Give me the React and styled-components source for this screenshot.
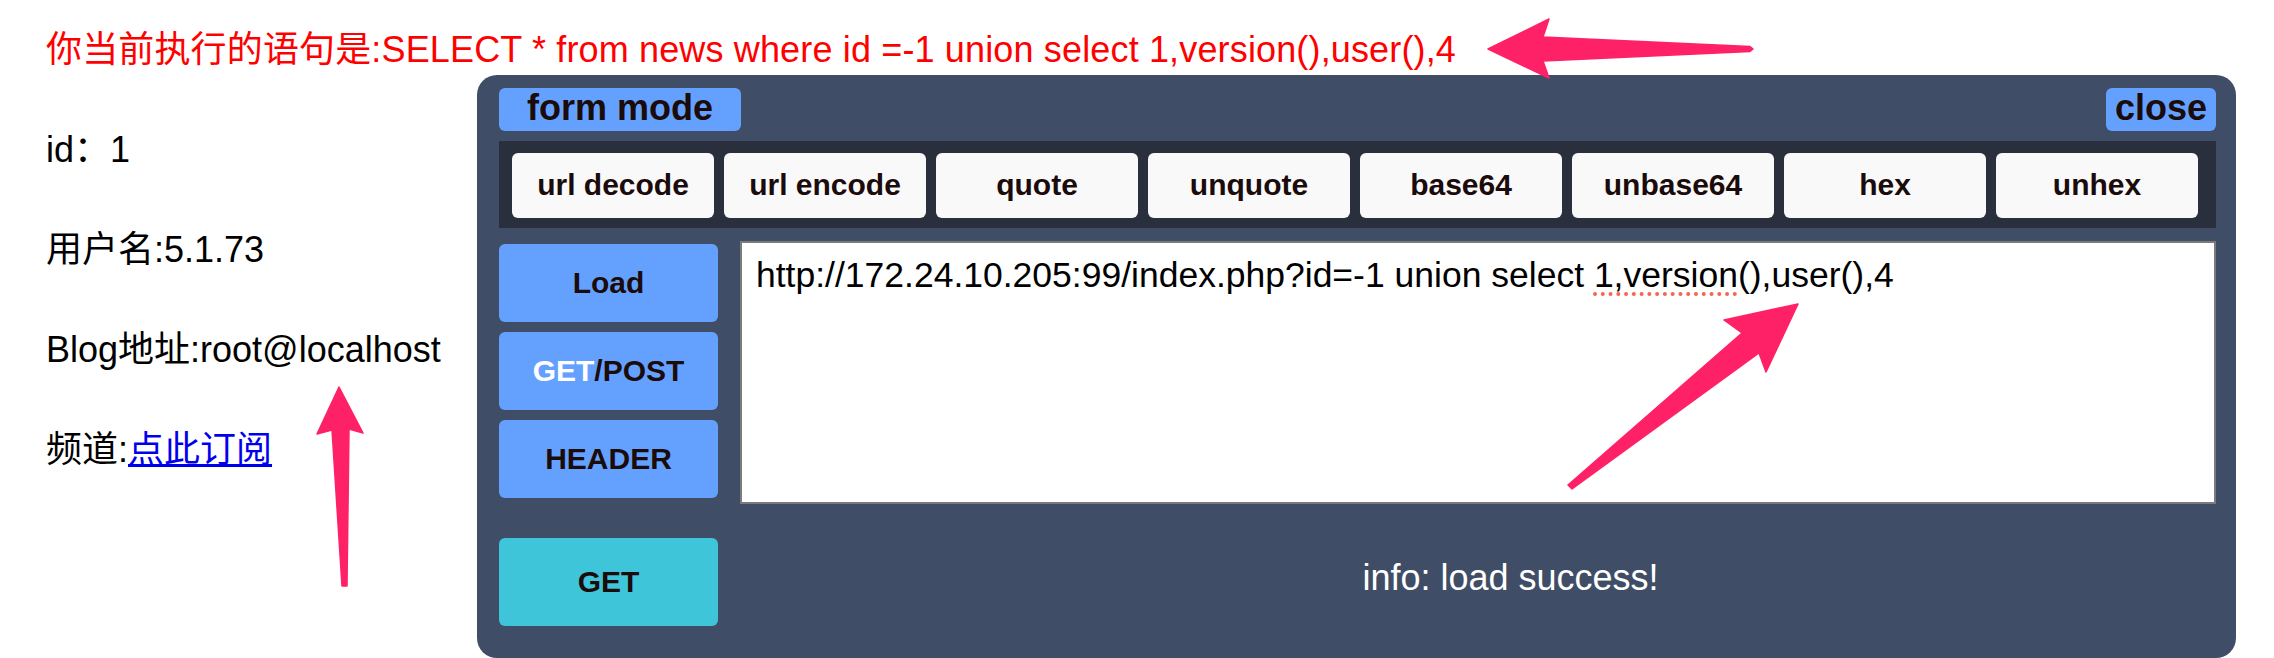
import React from "react";
import styled, { createGlobalStyle } from "styled-components";

const Global = createGlobalStyle`
  html, body { margin: 0; padding: 0; background: #ffffff; }
  body {
    font-family: "Liberation Sans", "Noto Sans CJK SC", Arial, sans-serif;
    font-size: 36px;
    color: #000;
  }
`;

const Page = styled.div`
  position: relative;
  width: 2274px;
  height: 658px;
  overflow: hidden;
  padding-left: 46px;
  box-sizing: border-box;
`;

const QueryLine = styled.div`
  padding-top: 29px;
  line-height: 41px;
  height: 42px;
  color: #ff0000;
  white-space: nowrap;
  letter-spacing: 0.15px;
`;

const Row = styled.div`
  display: flex;
  align-items: flex-start;
`;

const InfoColumn = styled.div`
  width: 431px;
  flex: none;
  padding-top: 58px;
  display: flex;
  flex-direction: column;
  gap: 59px;
`;

const InfoLine = styled.p`
  margin: 0;
  line-height: 41px;
  white-space: nowrap;
  color: #000;
`;

const SubLink = styled.a`
  color: #0000ee;
  text-decoration: underline;
`;

const Panel = styled.section`
  width: 1759px;
  box-sizing: border-box;
  margin-top: 4px;
  background: #3f4e66;
  border-radius: 20px;
  padding: 13px 20px 32px 22px;
  display: flex;
  flex-direction: column;
`;

const TopBar = styled.div`
  display: flex;
  justify-content: space-between;
  height: 43px;
`;

const BlueTab = styled.button`
  width: ${(p) => p.$w}px;
  height: 43px;
  padding: 0 0 3px;
  border: none;
  border-radius: 6px;
  background: #64a1ff;
  color: #1b0b0b;
  font: bold 36px/40px "Liberation Sans", Arial, sans-serif;
  text-align: center;
`;

const ToolStrip = styled.div`
  margin-top: 10px;
  background: #292f3c;
  padding: 12px 18px 10px 13px;
  display: flex;
  gap: 10px;
`;

const ToolButton = styled.button`
  width: 202px;
  height: 65px;
  flex: none;
  padding: 0 0 2px;
  border: none;
  border-radius: 6px;
  background: #f9f9f9;
  color: #1b0b0b;
  font: bold 30px/63px "Liberation Sans", Arial, sans-serif;
  text-align: center;
`;

const MainRow = styled.div`
  margin-top: 13px;
  display: flex;
  gap: 22px;
  height: 263px;
`;

const SideColumn = styled.div`
  width: 219px;
  flex: none;
  padding-top: 3px;
  display: flex;
  flex-direction: column;
  gap: 10px;
`;

const ActionButton = styled.button`
  width: 219px;
  height: ${(p) => p.$h || 78}px;
  padding: 0;
  border: none;
  border-radius: 6px;
  background: ${(p) => p.$bg || "#64a1ff"};
  color: #1b0b0b;
  font: bold 30px/1 "Liberation Sans", Arial, sans-serif;
  text-align: center;
`;

const Light = styled.span`
  color: #ffffff;
`;

const UrlField = styled.div`
  flex: 1;
  box-sizing: border-box;
  background: #ffffff;
  border: 2px solid #7b7b7b;
  padding: 12px 14px;
  font-size: 35.5px;
  line-height: 41px;
  color: #000;
  white-space: nowrap;
  overflow: hidden;
`;

const Misspelled = styled.span`
  text-decoration: underline dotted #f4664f;
  text-decoration-thickness: 4px;
  text-underline-offset: 5px;
`;

const BottomRow = styled.div`
  margin-top: 34px;
  display: flex;
  gap: 22px;
  height: 88px;
`;

const Status = styled.div`
  flex: 1;
  padding-top: 19px;
  padding-left: 65px;
  line-height: 41px;
  color: #ffffff;
  text-align: center;
  white-space: nowrap;
`;

const Annotations = styled.svg`
  position: absolute;
  left: 0;
  top: 0;
  width: 2274px;
  height: 658px;
  pointer-events: none;
`;

const tools = [
  "url decode",
  "url encode",
  "quote",
  "unquote",
  "base64",
  "unbase64",
  "hex",
  "unhex",
];

export default function App() {
  return (
    <>
      <Global />
      <Page>
        <QueryLine>
          你当前执行的语句是:SELECT * from news where id =-1 union select 1,version(),user(),4
        </QueryLine>
        <Row>
          <InfoColumn>
            <InfoLine>id：1</InfoLine>
            <InfoLine>用户名:5.1.73</InfoLine>
            <InfoLine>Blog地址:root@localhost</InfoLine>
            <InfoLine>
              频道:<SubLink href="#">点此订阅</SubLink>
            </InfoLine>
          </InfoColumn>
          <Panel>
            <TopBar>
              <BlueTab $w={242}>form mode</BlueTab>
              <BlueTab $w={110}>close</BlueTab>
            </TopBar>
            <ToolStrip>
              {tools.map((t) => (
                <ToolButton key={t}>{t}</ToolButton>
              ))}
            </ToolStrip>
            <MainRow>
              <SideColumn>
                <ActionButton>Load</ActionButton>
                <ActionButton>
                  <Light>GET</Light>/POST
                </ActionButton>
                <ActionButton>HEADER</ActionButton>
              </SideColumn>
              <UrlField role="textbox">
                http://172.24.10.205:99/index.php?id=-1 union select{" "}
                <Misspelled>1,version</Misspelled>(),user(),4
              </UrlField>
            </MainRow>
            <BottomRow>
              <ActionButton $h={88} $bg="#3fc5da">
                GET
              </ActionButton>
              <Status>info: load success!</Status>
            </BottomRow>
          </Panel>
        </Row>
        <Annotations viewBox="0 0 2274 658">
          <g fill="#ff2167" stroke="#ff2167" strokeWidth="1.5" strokeLinejoin="round">
            <polygon points="1488,49 1549,19 1543,37 1750,46.5 1753,49 1750,51.5 1543,61 1549,78" />
            <polygon points="339,387 317,434 332,430 342,586 347,586 349,429 363,433" />
            <polygon points="1568,485 1742,333 1724,320 1798,304 1766,372 1759,353 1572,489" />
          </g>
        </Annotations>
      </Page>
    </>
  );
}
